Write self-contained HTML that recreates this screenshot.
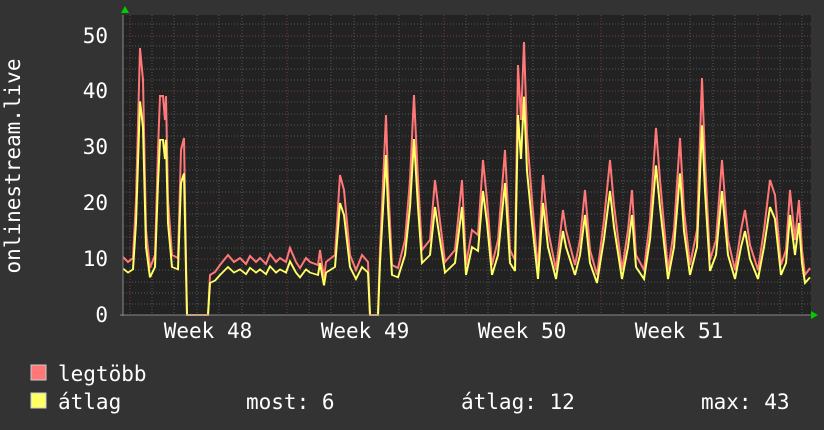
<!DOCTYPE html>
<html><head><style>
html,body{margin:0;padding:0;background:#333;}
svg{display:block;}
text{font-family:"DejaVu Sans Mono","Liberation Mono",monospace;fill:#fff;}
</style></head><body>
<svg width="824" height="430" viewBox="0 0 824 430" xmlns="http://www.w3.org/2000/svg">
<rect width="824" height="430" fill="#333"/>
<rect x="123" y="15" width="688" height="300" fill="#222"/>
<g stroke="#555" stroke-width="1" stroke-dasharray="1,2">
<line x1="123" x2="811" y1="304" y2="304"/><line x1="123" x2="811" y1="293" y2="293"/><line x1="123" x2="811" y1="282" y2="282"/><line x1="123" x2="811" y1="270" y2="270"/>
<line x1="123" x2="811" y1="248" y2="248"/><line x1="123" x2="811" y1="237" y2="237"/><line x1="123" x2="811" y1="226" y2="226"/><line x1="123" x2="811" y1="214" y2="214"/>
<line x1="123" x2="811" y1="192" y2="192"/><line x1="123" x2="811" y1="181" y2="181"/><line x1="123" x2="811" y1="170" y2="170"/><line x1="123" x2="811" y1="158" y2="158"/>
<line x1="123" x2="811" y1="136" y2="136"/><line x1="123" x2="811" y1="125" y2="125"/><line x1="123" x2="811" y1="114" y2="114"/><line x1="123" x2="811" y1="102" y2="102"/>
<line x1="123" x2="811" y1="80" y2="80"/><line x1="123" x2="811" y1="69" y2="69"/><line x1="123" x2="811" y1="58" y2="58"/><line x1="123" x2="811" y1="46" y2="46"/>
<line x1="123" x2="811" y1="24" y2="24"/>
<line x1="152" x2="152" y1="15" y2="315"/><line x1="174" x2="174" y1="15" y2="315"/><line x1="197" x2="197" y1="15" y2="315"/><line x1="219" x2="219" y1="15" y2="315"/><line x1="242" x2="242" y1="15" y2="315"/><line x1="264" x2="264" y1="15" y2="315"/>
<line x1="309" x2="309" y1="15" y2="315"/><line x1="331" x2="331" y1="15" y2="315"/><line x1="354" x2="354" y1="15" y2="315"/><line x1="376" x2="376" y1="15" y2="315"/><line x1="399" x2="399" y1="15" y2="315"/><line x1="421" x2="421" y1="15" y2="315"/>
<line x1="466" x2="466" y1="15" y2="315"/><line x1="488" x2="488" y1="15" y2="315"/><line x1="511" x2="511" y1="15" y2="315"/><line x1="533" x2="533" y1="15" y2="315"/><line x1="556" x2="556" y1="15" y2="315"/><line x1="578" x2="578" y1="15" y2="315"/>
<line x1="623" x2="623" y1="15" y2="315"/><line x1="645" x2="645" y1="15" y2="315"/><line x1="668" x2="668" y1="15" y2="315"/><line x1="690" x2="690" y1="15" y2="315"/><line x1="713" x2="713" y1="15" y2="315"/><line x1="735" x2="735" y1="15" y2="315"/>
<line x1="780" x2="780" y1="15" y2="315"/><line x1="802" x2="802" y1="15" y2="315"/>
</g>
<g stroke="#7a3a3a" stroke-width="1" stroke-dasharray="1,2">
<line x1="123" x2="811" y1="259" y2="259"/><line x1="123" x2="811" y1="203" y2="203"/><line x1="123" x2="811" y1="147" y2="147"/><line x1="123" x2="811" y1="91" y2="91"/><line x1="123" x2="811" y1="36" y2="36"/>
<line x1="130" x2="130" y1="15" y2="315"/><line x1="287" x2="287" y1="15" y2="315"/><line x1="444" x2="444" y1="15" y2="315"/><line x1="601" x2="601" y1="15" y2="315"/><line x1="758" x2="758" y1="15" y2="315"/>
</g>
<defs>
<polyline id="d" fill="none" points="123,257 128,262 133,258 136,200 140,48 143,80 146,230 150,268 155,255 158,150 160,96 163,96 165,120 166,96 168,200 172,255 178,258 181,150 184,138 186,260 187,315 208,315 210,275 215,272 220,265 228,255 234,262 240,258 246,264 250,256 256,262 260,258 266,264 270,254 276,262 280,258 286,262 290,248 296,262 300,268 306,258 310,262 318,265 320,250 324,278 326,262 335,255 340,175 344,190 350,255 356,270 362,255 368,262 370,315 378,315 380,250 384,160 386,115 388,180 392,265 398,268 405,240 410,180 414,95 418,180 422,250 430,240 435,180 438,205 445,262 455,250 462,180 466,265 472,230 478,235 483,160 487,200 492,265 498,240 505,150 510,250 515,260 518,65 521,120 524,42 527,135 532,200 538,270 543,175 548,230 556,270 563,210 566,230 575,265 580,240 585,190 590,250 597,275 604,220 610,160 614,205 622,270 628,230 632,190 636,255 644,270 650,220 656,128 660,180 668,270 674,230 680,138 684,210 690,265 697,230 702,78 705,160 710,260 716,240 722,160 728,240 735,270 741,230 745,210 750,245 758,270 764,230 770,180 775,195 781,265 786,250 790,190 795,240 799,200 802,250 805,275 810,268"/>
</defs>
<use href="#d" stroke="#ff7777" stroke-width="2"/>
<use href="#d" stroke="#ffff66" stroke-width="2" transform="translate(0,63) scale(1,0.8)" style="vector-effect:non-scaling-stroke"/>
<g stroke="#888" stroke-width="1"><line x1="123" x2="123" y1="15" y2="316"/><line x1="120" x2="812" y1="315" y2="315"/></g>
<polygon points="121,13 129,13 125,6" fill="#0c0"/>
<polygon points="811,311 811,319 818,315" fill="#0c0"/>
<g font-size="21" text-anchor="end">
<text x="108" y="322">0</text><text x="108" y="266">10</text><text x="108" y="210">20</text><text x="108" y="154">30</text><text x="108" y="98">40</text><text x="108" y="43">50</text>
</g>
<g font-size="21" text-anchor="middle">
<text x="208" y="338">Week 48</text><text x="365" y="338">Week 49</text><text x="522" y="338">Week 50</text><text x="679" y="338">Week 51</text>
</g>
<text x="20" y="166" font-size="21" text-anchor="middle" transform="rotate(-90 20 166)">onlinestream.live</text>
<rect x="31" y="365" width="15" height="15" fill="#ff7777" stroke="#ccc" stroke-width="1"/>
<rect x="31" y="393" width="15" height="15" fill="#ffff66" stroke="#ccc" stroke-width="1"/>
<g font-size="21">
<text x="58" y="381">legtöbb</text>
<text x="58" y="409">átlag</text>
<text x="246" y="409">most: 6</text>
<text x="461" y="409">átlag: 12</text>
<text x="701" y="409">max: 43</text>
</g>
</svg>
</body></html>
